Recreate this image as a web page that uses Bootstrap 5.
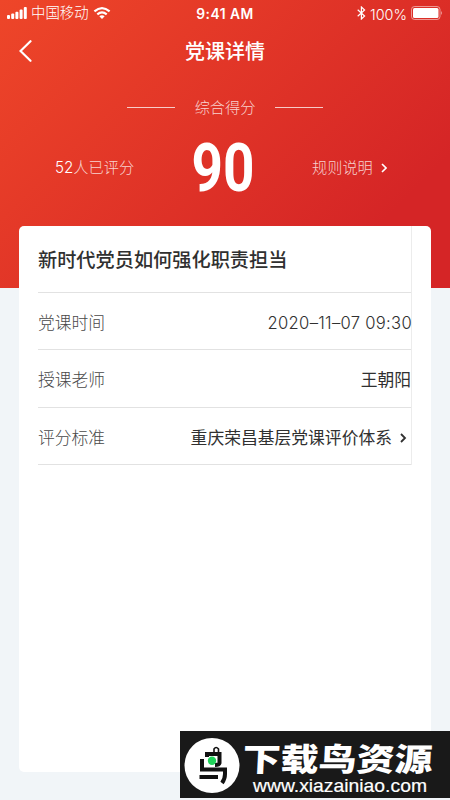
<!DOCTYPE html>
<html lang="zh-CN">

<head>
    <meta charset="UTF-8" />
    <meta name="viewport" content="width=device-width, initial-scale=1" />
    <title>党课详情</title>
    <link href="https://cdn.jsdelivr.net/npm/bootstrap@5.3.3/dist/css/bootstrap.min.css" rel="stylesheet">

    <style>
        body {
            font-family: Inter, "Noto Sans CJK SC", sans-serif;
            font-weight: 300;
            height: 800px;
            background: linear-gradient(135deg, #ee4629 0%, #d52526 82%) no-repeat 0 0 / 100% 288px, #f1f5f8;
        }

        svg {
            display: block;
            flex: none;
        }

        .status-bar {
            height: 28px;
            padding: 0 7px;
            font-size: 14.4px;
            line-height: 22px;
        }

        .status-side {
            width: 182px;
            height: 25px;
        }

        .status-time {
            font-size: 13.8px;
            line-height: 20px;
            letter-spacing: .5px;
        }

        .title-bar {
            height: 46px;
            padding: 0 19px;
        }

        .title-bar h1 {
            font-size: 20px;
            font-weight: 500;
            padding-top: 2px;
        }

        .title-side {
            width: 20px;
        }

        .score-label {
            height: 66px;
            font-size: 15.2px;
            gap: 19.5px;
        }

        .score-label .faded {
            padding-top: 2px;
        }

        .score-line {
            width: 48px;
            height: 1px;
            background: rgba(255, 255, 255, .75);
        }

        .faded {
            color: rgba(255, 255, 255, .78);
        }

        .score-row {
            height: 54px;
            padding: 0 58px 0 55px;
            font-size: 15.2px;
        }

        .score-row .side-info {
            width: 80px;
            padding-top: 2px;
        }

        .score-value {
            overflow: visible;
        }

        .detail-card {
            height: 546px;
            margin: 31.5px 19px 0;
            border-radius: 5px;
            padding-left: 19px;
            padding-right: 19px;
        }

        .detail-list {
            border-right: 1px solid #ececec;
            font-size: 16.8px;
            color: #303030;
        }

        .detail-list li {
            height: 57.5px;
            padding-top: 5px;
            border-bottom: 1px solid #e2e2e2;
        }

        .detail-list li:first-child {
            height: 67px;
        }

        .detail-list h2 {
            font-size: 19.2px;
            font-weight: 500;
        }

        .field-name {
            color: #484848;
        }

        .field-date {
            font-size: 16.6px;
            font-weight: 350;
            letter-spacing: .3px;
            margin-right: -1px;
        }

        .field-value {
            font-weight: 400;
        }

        .watermark {
            right: 0;
            top: 731px;
            width: 270px;
            height: 67px;
            background: #191919;
        }
    </style>
</head>

<body>
    <header class="text-white">
        <div class="status-bar d-flex justify-content-between">
            <div class="status-side d-flex align-items-center">
                <svg width="20" height="12" fill="#fff">
                    <rect x="0" y="8" width="3" height="4" rx="1" />
                    <rect x="4.2" y="6.5" width="3" height="5.5" rx="1" />
                    <rect x="8.4" y="4.8" width="3" height="7.2" rx="1" />
                    <rect x="12.6" y="2.5" width="3" height="9.5" rx="1" />
                    <rect x="16.8" y="0" width="3" height="12" rx="1" />
                </svg>
                <span class="ms-1">中国移动</span>
                <svg class="ms-1" width="18" height="12" viewBox="0 0 18 12" fill="none" stroke="#fff" stroke-width="2.2">
                    <path d="M1.4 4.4Q9-2.1 16.6 4.4M4.3 7.3Q9 3.4 13.7 7.3" />
                    <path d="M6.3 9.3Q9 7.3 11.7 9.3L9 12z" fill="#fff" stroke="none" />
                </svg>
            </div>
            <span class="status-time fw-semibold pt-1">9:41 AM</span>
            <div class="status-side d-flex align-items-center justify-content-end">
                <svg width="9" height="14" viewBox="0 0 9 14" fill="none" stroke="#fff" stroke-width="1.2">
                    <path d="M.7 3.7L7.6 10 4.4 13V1L7.6 4 .7 10.3" />
                </svg>
                <span class="ms-1 pt-1">100%</span>
                <svg class="ms-1" width="32" height="14" fill="#fff">
                    <rect x=".5" y=".5" width="28.5" height="13" rx="3" fill="none" stroke="#fff" stroke-opacity=".5" />
                    <rect x="2" y="2" width="25.5" height="10" rx="1.5" />
                    <path d="M30 5Q32 7 30 9z" opacity=".5" />
                </svg>
            </div>
        </div>

        <div class="title-bar d-flex align-items-center justify-content-between">
            <svg class="title-side" width="20" height="22" viewBox="0 0 20 22" fill="none" stroke="#fff" stroke-width="2.2" stroke-linecap="round">
                <path d="M11.5 1.2L1.5 11 11.5 20.8" />
            </svg>
            <h1 class="mb-0">党课详情</h1>
            <span class="title-side"></span>
        </div>

        <div class="score-label d-flex align-items-center justify-content-center">
            <span class="score-line"></span>
            <span class="faded">综合得分</span>
            <span class="score-line"></span>
        </div>

        <div class="score-row d-flex align-items-center justify-content-between">
            <div class="side-info faded text-nowrap"><span class="text-white">52</span>人已评分</div>
            <svg class="score-value" width="64" height="54" viewBox="0 0 64 54" fill="#fff">
                <text x="-.5" y="51" font-family="Roboto" font-weight="700" font-size="67" textLength="63" lengthAdjust="spacingAndGlyphs">90</text>
            </svg>
            <div class="side-info faded text-nowrap d-flex align-items-center">规则说明
                <svg class="ms-2" width="6" height="10" viewBox="0 0 6 10" fill="none" stroke="#fff" stroke-width="1.6">
                    <path d="M1 1L5 5 1 9" />
                </svg>
            </div>
        </div>
    </header>

    <main class="detail-card bg-white">
        <ul class="detail-list list-unstyled mb-0">
            <li class="d-flex align-items-center">
                <h2 class="mb-0">新时代党员如何强化职责担当</h2>
            </li>
            <li class="d-flex align-items-center justify-content-between">
                <span class="field-name">党课时间</span>
                <span class="field-date">2020–11–07 09:30</span>
            </li>
            <li class="d-flex align-items-center justify-content-between">
                <span class="field-name">授课老师</span>
                <span class="field-value">王朝阳</span>
            </li>
            <li class="d-flex align-items-center justify-content-between">
                <span class="field-name">评分标准</span>
                <span class="field-value d-flex align-items-center">重庆荣昌基层党课评价体系
                    <svg class="ms-2 me-1" width="7" height="10" viewBox="0 0 7 10" fill="none" stroke="#303030" stroke-width="1.8">
                        <path d="M1 1L5 5 1 9" />
                    </svg>
                </span>
            </li>
        </ul>
    </main>

    <!-- site watermark -->
    <div class="watermark position-absolute">
        <svg width="270" height="67" viewBox="0 0 270 67" fill="#fff">
            <circle cx="32" cy="34.5" r="27.5" />
            <g fill="none" stroke="#111" stroke-width="4">
                <path d="M34 21V18Q36 15 38.5 18V21" stroke-width="1.6" />
                <path d="M27 26V23H39.5V32Q39 34 35 34M22 28V38.5H45V43Q45 48 42 52M19.5 46H38" />
            </g>
            <circle cx="32" cy="29.7" r="4.2" fill="#20d35a" />
            <text transform="translate(62 40) skewX(-3)" font-family="Noto Sans CJK SC" font-weight="900" font-size="32" textLength="190" lengthAdjust="spacingAndGlyphs">下载鸟资源</text>
            <text x="73" y="61" font-family="Liberation Sans" font-size="19" stroke="#fff" stroke-width=".2" textLength="174" lengthAdjust="spacingAndGlyphs">www.xiazainiao.com</text>
        </svg>
    </div>

    <script src="https://cdn.jsdelivr.net/npm/bootstrap@5.3.3/dist/js/bootstrap.bundle.min.js"></script>
</body>

</html>
